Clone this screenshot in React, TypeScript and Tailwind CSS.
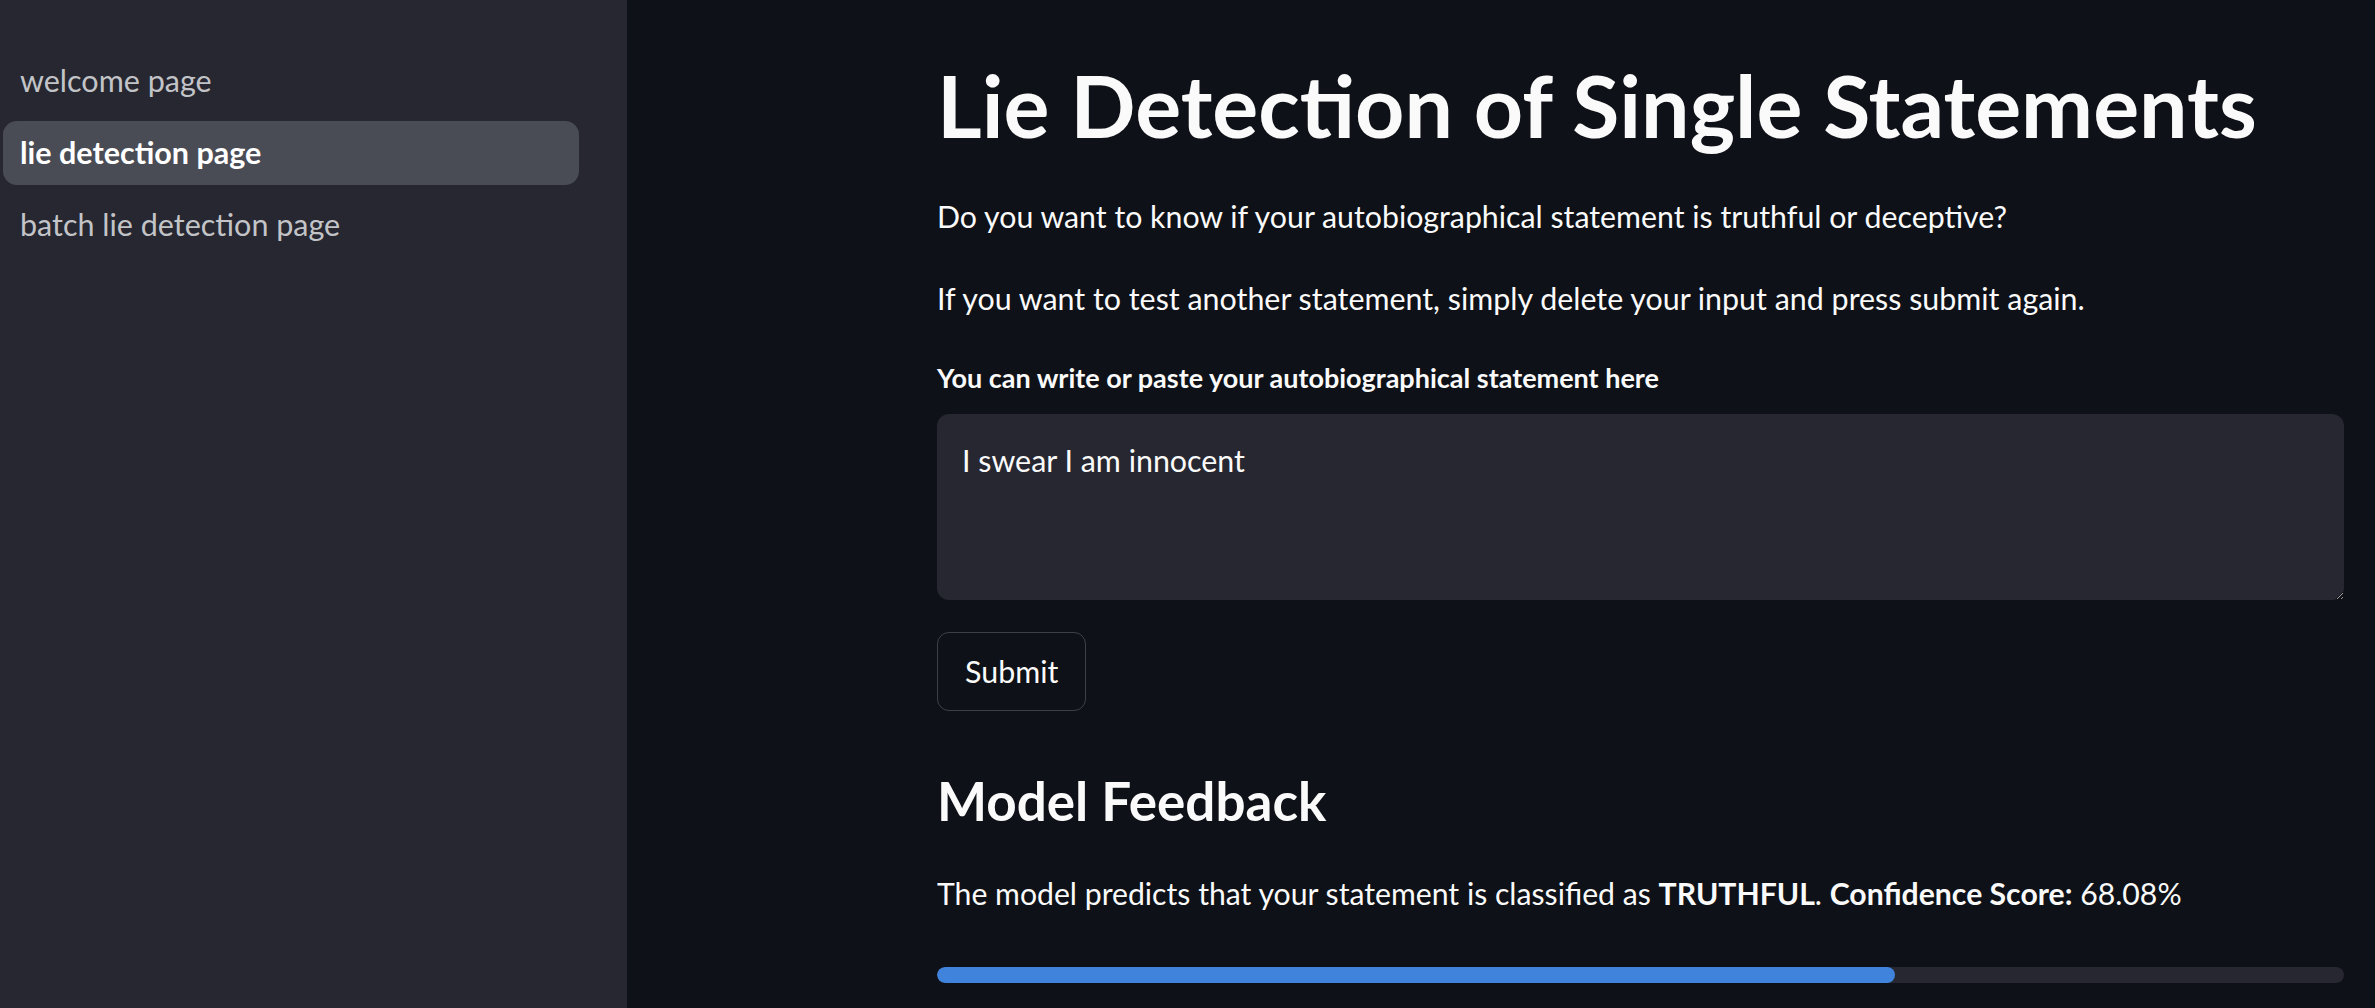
import React from 'react';

const navItems = [
  { label: 'welcome page', active: false },
  { label: 'lie detection page', active: true },
  { label: 'batch lie detection page', active: false },
];

export default function App() {
  const confidence = 68.08;

  return (
    <div
      className="flex h-[1008px] w-full overflow-hidden bg-[#0e1117] text-[#fafafa]"
      style={{ fontFamily: 'Lato, "Noto Sans", sans-serif' }}
    >
      {/* sidebar */}
      <aside className="flex w-[627px] shrink-0 flex-col gap-[8px] bg-[#262730] pt-[49px] pl-[3px] pr-[48px]">
        {navItems.map((item) => (
          <div
            key={item.label}
            className={
              item.active
                ? 'flex h-[64px] items-center rounded-[14px] bg-[#4a4c55] pl-[17px] text-[30.5px] font-bold text-white'
                : 'flex h-[64px] items-center rounded-[14px] pl-[17px] text-[30.5px] text-[#c3c4c8]'
            }
          >
            {item.label}
          </div>
        ))}
      </aside>

      {/* main */}
      <main className="flex flex-1 flex-col pl-[310px] pr-[31px]">
        <h1 className="mt-[52px] h-[106px] text-[86px] leading-[106px] font-bold">
          Lie Detection of Single Statements
        </h1>
        <p className="mt-[38px] h-[40px] text-[30.3px] leading-[40px]">
          Do you want to know if your autobiographical statement is truthful or deceptive?
        </p>
        <p className="mt-[42px] h-[40px] text-[30.4px] leading-[40px]">
          If you want to test another statement, simply delete your input and press submit again.
        </p>
        <label className="mt-[42px] h-[36px] text-[27px] leading-[36px] font-bold">
          You can write or paste your autobiographical statement here
        </label>
        <textarea
          readOnly
          defaultValue="I swear I am innocent"
          className="mt-[18px] h-[186px] w-full resize-y rounded-[12px] bg-[#262730] px-[25px] pt-[26px] text-[30.4px] leading-[40px] text-[#fafafa] outline-none [color-scheme:dark]"
        />
        <div className="mt-[32px]">
          <button className="h-[79px] rounded-[12px] border border-[#fafafa]/20 px-[27px] text-[30.4px]">
            Submit
          </button>
        </div>
        <h3 className="mt-[60px] h-[60px] text-[53px] leading-[60px] font-bold">Model Feedback</h3>
        <p className="mt-[42px] h-[40px] text-[30.2px] leading-[40px]">
          The model predicts that your statement is classified as <strong>TRUTHFUL</strong>.{' '}
          <strong>Confidence Score:</strong> {confidence.toFixed(2)}%
        </p>
        <div className="mt-[54px] h-[16px] w-full overflow-hidden rounded-full bg-[#262730]">
          <div className="h-full rounded-full bg-[#4083dc]" style={{ width: `${confidence}%` }} />
        </div>
      </main>
    </div>
  );
}
